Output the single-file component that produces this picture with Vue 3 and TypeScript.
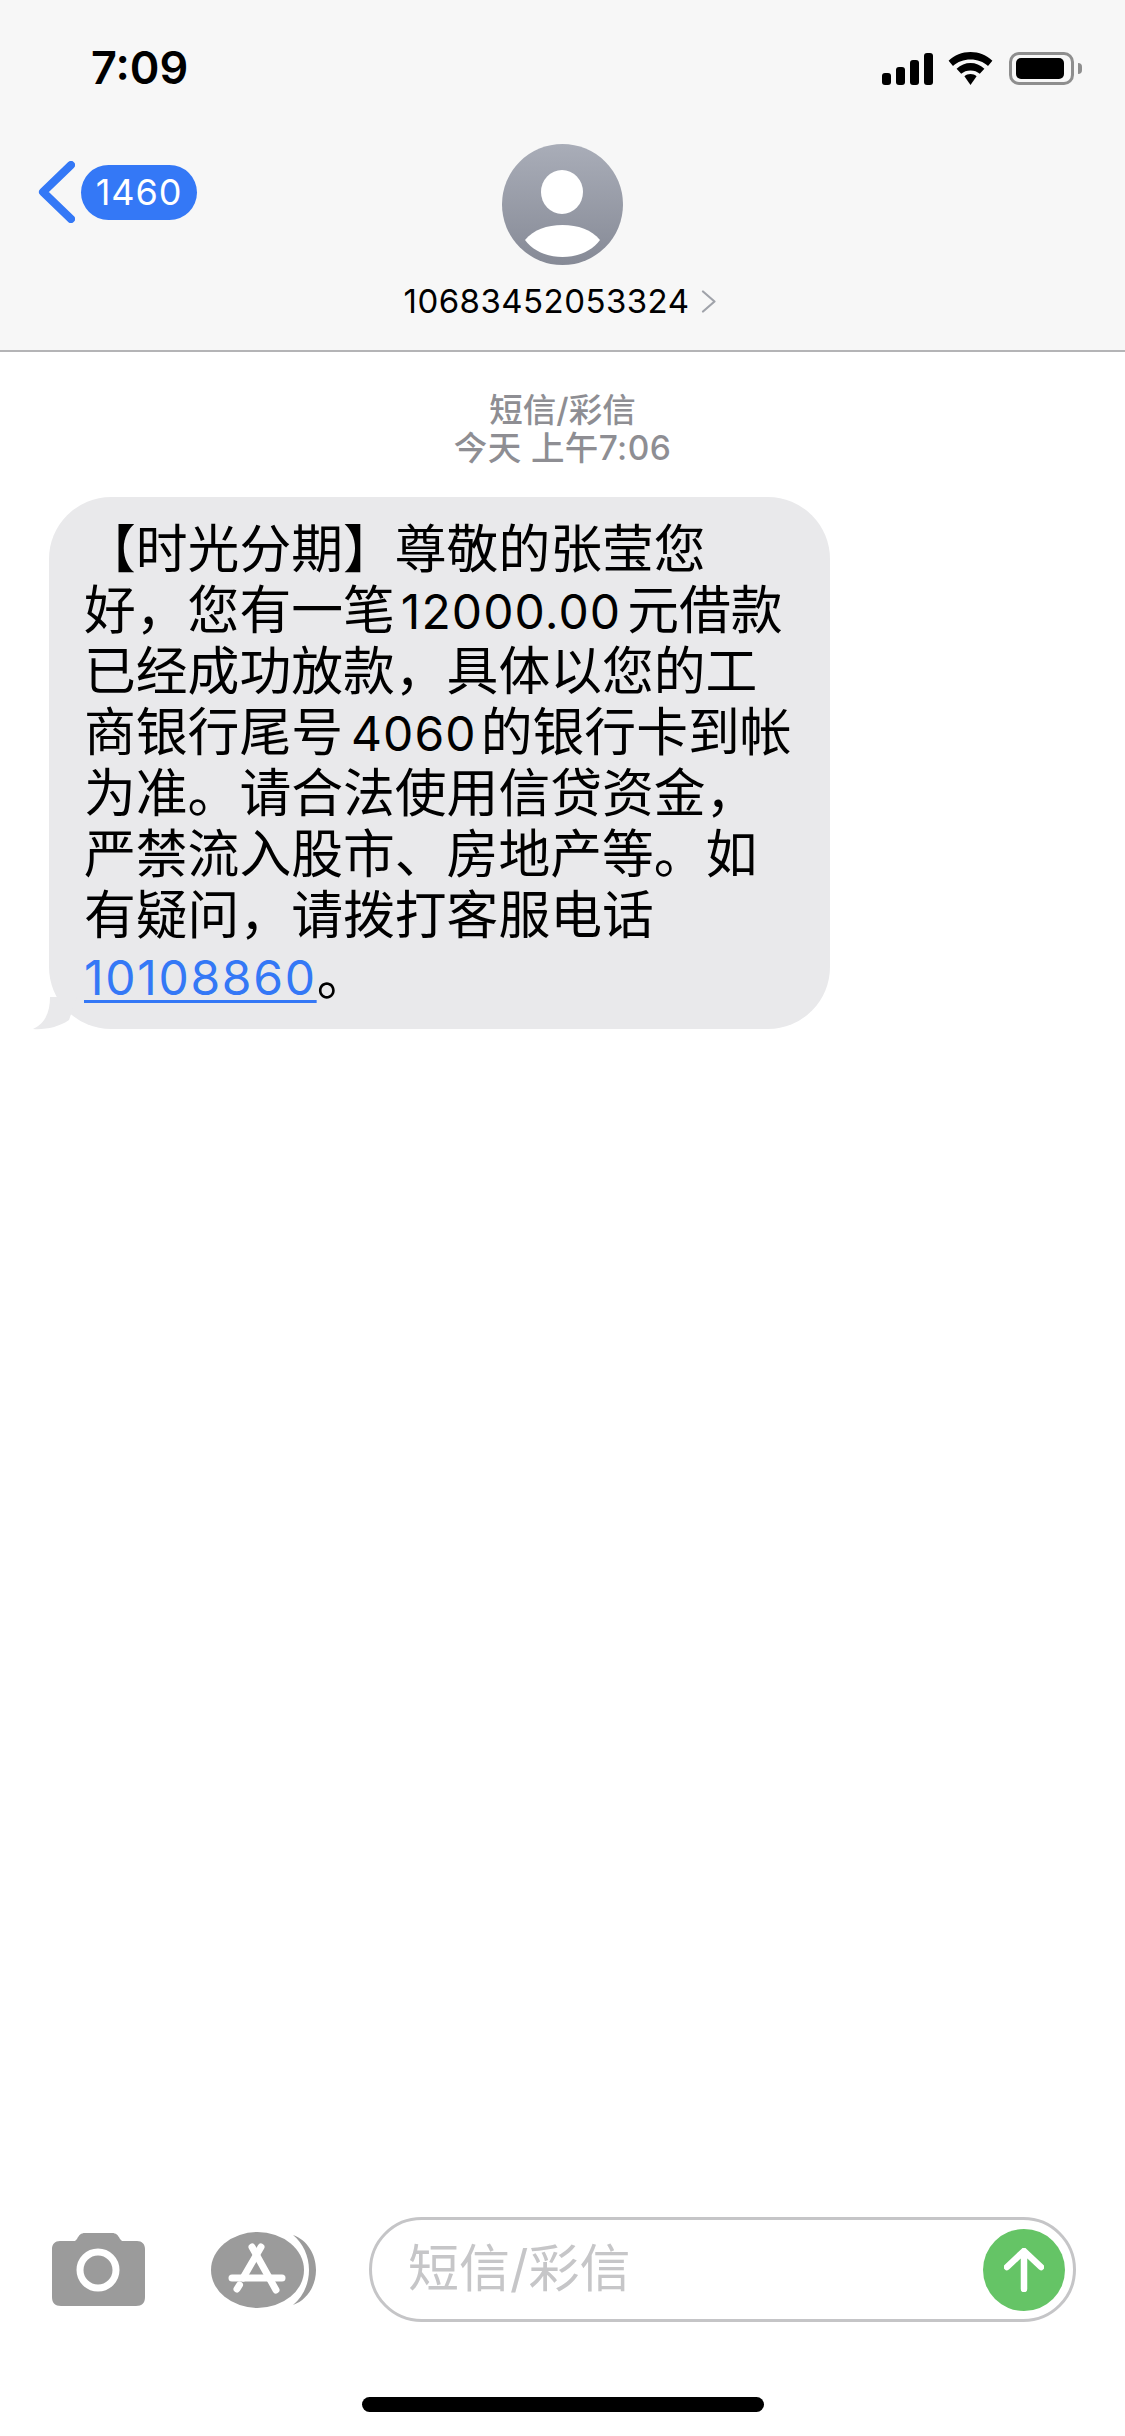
<script setup lang="ts">
const signalBars: { h: number }[] = [{ h: 12 }, { h: 18 }, { h: 25 }, { h: 32 }]
</script>

<template>
  <div class="screen" lang="zh-CN">
    <header class="head">
      <div class="status">
        <span class="time">7:09</span>
        <div class="status-icons">
          <div class="signal">
            <i v-for="(b, i) in signalBars" :key="i" :style="{ height: b.h + 'px' }"></i>
          </div>
          <svg class="wifi" width="45" height="33" viewBox="0 0 45 33">
            <path d="M22.5 0C14 0 6.5 3.3 0.6 8.8L5 13.9C9.6 9.6 15.7 7.4 22.5 7.4S35.4 9.6 40 13.9L44.4 8.8C38.5 3.3 31 0 22.5 0Z" fill="#000"/>
            <path d="M22.5 11C17.4 11 12.7 13 8.6 16.8L13.2 21.8C15.6 19.6 19 18.400 22.5 18.400S29.400 19.600 31.800 21.800L36.400 16.800C32.300 13 27.600 11 22.5 11Z" fill="#000"/>
            <path d="M22.5 22C20.200 22 18 22.900 16.400 24.300L22.5 33L28.600 24.300C27 22.900 24.800 22 22.5 22Z" fill="#000"/>
          </svg>
          <div class="battery"><div class="battery-fill"></div></div>
          <div class="battery-cap"></div>
        </div>
      </div>
      <div class="nav">
        <div class="back">
          <svg width="37" height="62" viewBox="0 0 37 62">
            <path d="M33 4L5 31L33 58" fill="none" stroke="#3478f6" stroke-width="8" stroke-linecap="round" stroke-linejoin="round"/>
          </svg>
          <span class="badge">1460</span>
        </div>
        <div class="contact">
          <svg class="avatar" width="121" height="121" viewBox="0 0 121 121">
            <defs>
              <linearGradient id="av" x1="0" y1="0" x2="0" y2="1">
                <stop offset="0" stop-color="#a9adb8"/>
                <stop offset="1" stop-color="#868a96"/>
              </linearGradient>
            </defs>
            <circle cx="60.5" cy="60.5" r="60.5" fill="url(#av)"/>
            <ellipse cx="60" cy="48" rx="21" ry="22" fill="#fff"/>
            <path d="M23 96C31 86 45 81 60.500 81S90 86 98 96C90 107 76 113 60.500 113S31 107 23 96Z" fill="#fff"/>
          </svg>
          <div class="number">
            <span>10683452053324</span>
            <svg width="16" height="23" viewBox="0 0 16 23">
              <path d="M2 1.500L13.500 11.500L2 21.500" fill="none" stroke="#a0a3aa" stroke-width="2.200" stroke-linecap="round" stroke-linejoin="round"/>
            </svg>
          </div>
        </div>
      </div>
    </header>

    <main class="thread">
      <div class="meta">
        <div>短信/彩信</div>
        <div>今天 上午7:06</div>
      </div>
      <div class="bubble">
        <div class="line">【时光分期】尊敬的张莹您</div>
        <div class="line">好，您有一笔<span class="n">12000.00</span>元借款</div>
        <div class="line">已经成功放款，具体以您的工</div>
        <div class="line">商银行尾号<span class="n tight">4060</span>的银行卡到帐</div>
        <div class="line">为准。请合法使用信贷资金，</div>
        <div class="line">严禁流入股市、房地产等。如</div>
        <div class="line">有疑问，请拨打客服电话</div>
        <div class="line"><a class="link">10108860</a>。</div>
        <svg class="tail" width="44" height="34" viewBox="0 0 44 34">
          <path d="M17 0C17 14 13 26 0 32C12 33 26 30 36 23L44 0Z" fill="#e9e9eb"/>
        </svg>
      </div>
    </main>

    <footer class="composer">
      <div class="tools">
        <svg class="camera" width="93" height="73" viewBox="0 0 93 73">
          <path d="M33 0H60C64 0 66 2 68 6L70 8H85C90 8 93 11 93 16V64C93 70 90 73 84 73H9C3 73 0 70 0 64V16C0 11 3 8 8 8H23L25 6C27 2 29 0 33 0Z" fill="#9b9b9b"/>
          <ellipse cx="46" cy="37" rx="18" ry="18" fill="none" stroke="#fff" stroke-width="7"/>
        </svg>
        <svg class="apps" width="106" height="76" viewBox="0 0 106 76">
          <ellipse cx="46.500" cy="38" rx="46.500" ry="38" fill="#9b9b9b"/>
          <path d="M82 3C96 8 105 22 105 38S96 68 82 73C92 65 98 52 98 38S92 11 82 3Z" fill="#9b9b9b"/>
          <g fill="none" stroke="#fff" stroke-width="7" stroke-linecap="round">
            <path d="M21 46H71"/>
            <path d="M50 15L32 46"/>
            <path d="M41 15L65 58"/>
            <path d="M26 57L28.500 53"/>
          </g>
        </svg>
      </div>
      <div class="field">
        <span class="placeholder">短信/彩信</span>
        <span class="send">
          <svg width="40" height="44" viewBox="0 0 40 44">
            <path d="M20 41V4M3 19L20 3L37 19" fill="none" stroke="#fff" stroke-width="6.500" stroke-linecap="round" stroke-linejoin="round"/>
          </svg>
        </span>
      </div>
    </footer>
    <div class="home-row"><div class="home"></div></div>
  </div>
</template>

<style scoped>
.screen {
  width: 1125px;
  height: 2436px;
  background: #fff;
  display: flex;
  flex-direction: column;
  overflow: hidden;
  font-family: Inter, "Noto Sans CJK SC", sans-serif;
  color: #000;
}
.head {
  height: 352px;
  box-sizing: border-box;
  background: #f7f7f7;
  border-bottom: 2px solid #b4b4b6;
  flex: none;
}
.status {
  height: 144px;
  box-sizing: border-box;
  padding: 44px 43px 0 91px;
  display: flex;
  justify-content: space-between;
  align-items: flex-start;
}
.time {
  font-size: 45px;
  font-weight: 600;
  line-height: 48px;
}
.status-icons {
  display: flex;
  align-items: flex-start;
  padding-top: 8px;
}
.signal {
  display: flex;
  align-items: flex-end;
  gap: 5px;
  height: 33px;
  width: 51px;
  margin-right: 15px;
}
.signal i {
  display: block;
  width: 9px;
  border-radius: 3px;
  background: #000;
}
.wifi {
  margin-right: 16px;
}
.battery {
  width: 65px;
  height: 33px;
  box-sizing: border-box;
  border: 3px solid #8e8e8e;
  border-radius: 10px;
  padding: 3px 4px;
  margin-right: 4px;
}
.battery-fill {
  width: 48px;
  height: 21px;
  background: #000;
  border-radius: 5px;
}
.battery-cap {
  width: 4px;
  height: 11px;
  margin-top: 11px;
  background: #8e8e8e;
  border-radius: 0 4px 4px 0;
}
.nav {
  display: grid;
  grid-template-columns: 1fr auto 1fr;
  align-items: start;
  height: 205px;
}
.back {
  display: flex;
  align-items: center;
  padding: 17px 0 0 38px;
  gap: 6px;
}
.back svg {
  display: block;
}
.badge {
  width: 116px;
  height: 55px;
  border-radius: 28px;
  background: #3478f6;
  color: #fff;
  font-size: 36px;
  letter-spacing: 0.9px;
  line-height: 55px;
  text-align: center;
}
.contact {
  grid-column: 2;
  display: flex;
  flex-direction: column;
  align-items: center;
}
.avatar {
  display: block;
}
.number {
  display: flex;
  align-items: center;
  margin-top: 18px;
  height: 36px;
  font-size: 33px;
  letter-spacing: 0.45px;
  line-height: 36px;
  gap: 12px;
  margin-left: -4px;
}
.number svg {
  display: block;
}
.thread {
  flex: 1;
  padding-top: 39px;
}
.meta {
  text-align: center;
  color: #8e8e93;
  font-size: 33.500px;
  line-height: 38px;
  font-weight: 500;
}
.meta div:last-child {
  letter-spacing: 0.4px;
}
.bubble {
  position: relative;
  margin: 30px 0 0 49px;
  width: 781px;
  height: 532px;
  box-sizing: border-box;
  padding: 22px 0 0 35px;
  background: #e9e9eb;
  border-radius: 62px;
  font-size: 51.800px;
  line-height: 61px;
}
.line {
  white-space: nowrap;
  height: 61px;
}
.n {
  font-size: 48px;
  letter-spacing: 1.100px;
  margin: 0 6px 0 6px;
}
.n.tight {
  margin: 0 4px 0 8px;
}
.link {
  color: #3478f6;
  font-size: 48px;
  letter-spacing: 1.700px;
  text-decoration: underline;
  text-decoration-thickness: 3px;
  text-underline-offset: 5px;
}
.tail {
  position: absolute;
  left: -16px;
  bottom: -2px;
}
.composer {
  flex: none;
  display: flex;
  align-items: center;
  height: 105px;
  padding: 0 48px 0 52px;
}
.tools {
  display: flex;
  align-items: center;
  width: 318px;
  gap: 66px;
}
.tools svg {
  display: block;
}
.field {
  width: 707px;
  height: 105px;
  box-sizing: border-box;
  border: 3px solid #c5c5c7;
  border-radius: 53px;
  display: flex;
  align-items: center;
  justify-content: space-between;
  padding: 0 8px 0 36px;
  margin-left: -1px;
}
.placeholder {
  font-size: 51px;
  line-height: 60px;
  margin-top: -2px;
  color: #c6c6c8;
}
.send {
  width: 82px;
  height: 82px;
  border-radius: 50%;
  background: #65c466;
  display: flex;
  align-items: center;
  justify-content: center;
}
.send svg {
  display: block;
}
.home-row {
  flex: none;
  height: 114px;
  padding-top: 75px;
  box-sizing: border-box;
  display: flex;
  justify-content: center;
}
.home {
  width: 402px;
  height: 15px;
  border-radius: 8px;
  background: #000;
}
</style>
